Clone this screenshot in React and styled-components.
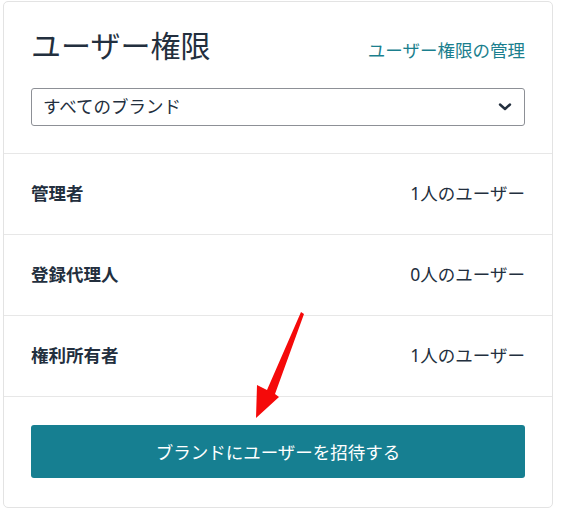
import React from 'react';
import styled, { createGlobalStyle } from 'styled-components';

const GlobalStyle = createGlobalStyle`
  body {
    margin: 0;
    background: #fff;
    font-family: 'Noto Sans', 'Noto Sans CJK JP', sans-serif;
  }
`;

const roles = [
  { name: '管理者', count: '1人のユーザー' },
  { name: '登録代理人', count: '0人のユーザー' },
  { name: '権利所有者', count: '1人のユーザー' },
];

export default function App() {
  return (
    <Page>
      <GlobalStyle />
      <Card>
        <Header>
          <TitleRow>
            <Title>ユーザー権限</Title>
            <ManageLink href='#'>ユーザー権限の管理</ManageLink>
          </TitleRow>
          <Select>
            <span>すべてのブランド</span>
            <svg width='14' height='10' viewBox='0 0 14 10'>
              <path
                d='M2 2.5 L7 7 L12 2.5'
                fill='none'
                stroke='#232f3e'
                strokeWidth='2.4'
                strokeLinecap='round'
                strokeLinejoin='round'
              />
            </svg>
          </Select>
        </Header>
        {roles.map((r) => (
          <Row key={r.name}>
            <RoleName>{r.name}</RoleName>
            <RoleCount>{r.count}</RoleCount>
          </Row>
        ))}
        <Footer>
          <InviteButton>ブランドにユーザーを招待する</InviteButton>
        </Footer>
      </Card>
      <Arrow width='564' height='511' viewBox='0 0 564 511'>
        <polygon
          points='301,312 304,314 275,394 279,397 256,418 257,385 267,390'
          fill='#f50a0a'
        />
      </Arrow>
    </Page>
  );
}

const Page = styled.div`
  position: relative;
  width: 564px;
  height: 511px;
  padding: 1px 0 0 3px;
  box-sizing: border-box;
`;

const Card = styled.div`
  width: 550px;
  height: 507px;
  box-sizing: border-box;
  border: 1px solid #e3e3e3;
  border-radius: 5px;
  display: flex;
  flex-direction: column;
`;

const Header = styled.div`
  padding: 23px 27px 27px 27px;
  border-bottom: 1px solid #e7e7e7;
`;

const TitleRow = styled.div`
  display: flex;
  justify-content: space-between;
  align-items: baseline;
  height: 63px;
`;

const Title = styled.h1`
  margin: 0;
  font-size: 30px;
  font-weight: 400;
  color: #232f3e;
  line-height: 42px;
`;

const ManageLink = styled.a`
  font-size: 17.5px;
  color: #1b7f8e;
  text-decoration: none;
`;

const Select = styled.div`
  height: 38px;
  box-sizing: border-box;
  border: 1px solid #8d9096;
  border-radius: 3px;
  display: flex;
  align-items: center;
  justify-content: space-between;
  padding: 0 12px 3px 11px;
  font-size: 17.5px;
  color: #232f3e;

  svg {
    margin-top: 3px;
  }
`;

const Row = styled.div`
  height: 81px;
  box-sizing: border-box;
  border-bottom: 1px solid #e7e7e7;
  display: flex;
  align-items: center;
  justify-content: space-between;
  padding: 0 27px 3px 27px;
  font-size: 17.5px;
  color: #232f3e;
`;

const RoleName = styled.span`
  font-weight: 700;
`;

const RoleCount = styled.span`
  font-weight: 400;
`;

const Footer = styled.div`
  padding: 28px 27px 0 27px;
`;

const InviteButton = styled.button`
  width: 100%;
  height: 53px;
  padding-bottom: 2px;
  border: none;
  border-radius: 3px;
  background: #167f91;
  color: #fff;
  font-family: inherit;
  font-size: 17.5px;
  cursor: pointer;
`;

const Arrow = styled.svg`
  position: absolute;
  left: 0;
  top: 0;
  pointer-events: none;
`;
